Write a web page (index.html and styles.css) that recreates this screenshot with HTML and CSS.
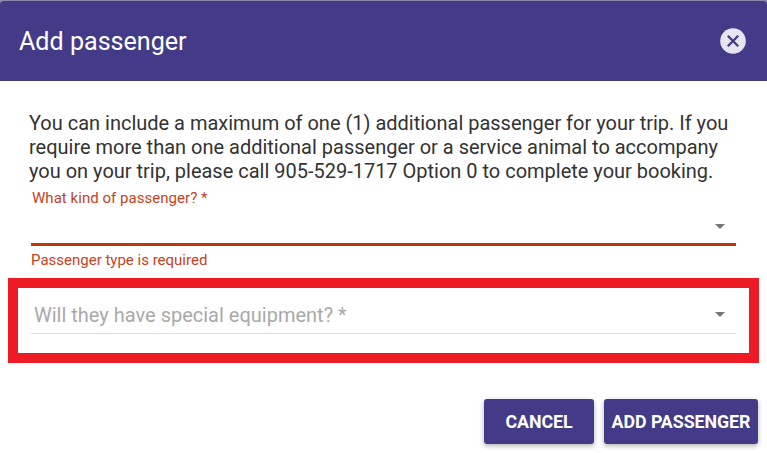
FILE: index.html
```html
<!DOCTYPE html>
<html lang="en">
  <head>
    <meta charset="utf-8">
    <title>Add passenger</title>
    <link rel="stylesheet" href="styles.css">
  </head>

  <body>
    <div class="dialog">
      <header class="toolbar">
        <h2>Add passenger</h2>
        <button class="close" aria-label="Close">
          <svg width="26" height="26" viewBox="0 0 26 26">
            <circle cx="13" cy="13" r="12.8" fill="#e7e5f2"/>
            <path d="M7.8 7.8l10.4 10.4M18.2 7.8L7.8 18.2" stroke="#433b87" stroke-width="2.3"/>
          </svg>
        </button>
      </header>

      <div class="content">
        <p>You can include a maximum of one (1) additional passenger for your trip. If you<br>
          require more than one additional passenger or a service animal to accompany<br>
          you on your trip, please call 905-529-1717 Option 0 to complete your booking.</p>

        <div class="field invalid">
          <label>What kind of passenger? *</label>
          <div class="select"><span class="arrow"></span></div>
          <div class="error">Passenger type is required</div>
        </div>
      </div>

      <div class="highlight">
        <div class="select">
          <span class="placeholder">Will they have special equipment? *</span>
          <span class="arrow"></span>
        </div>
      </div>

      <footer class="actions">
        <button class="btn btn-cancel">CANCEL</button>
        <button class="btn btn-add">ADD PASSENGER</button>
      </footer>
    </div>
  </body>
</html>
```

FILE: styles.css
```css
* {
  box-sizing: border-box;
  margin: 0;
}
body {
  font-family: Roboto, "Liberation Sans", sans-serif;
  color: #333;
  background-color: #8c88b2;
}
.dialog {
  height: 453px;
  padding-top: 1px;
  overflow: hidden;
  background: linear-gradient(#8c88b2 20px, #fff 20px);
}
.toolbar {
  display: flex;
  align-items: center;
  justify-content: space-between;
  height: 80px;
  padding: 0 21px 0 19px;
  border-radius: 4px 4px 0 0;
  background-color: #433b87;
  color: #fff;
}
.toolbar h2 {
  padding-top: 1px;
  font-size: 25.1px;
  font-weight: 400;
}
button {
  border: none;
  font-family: inherit;
}
.close {
  padding: 0;
  height: 26px;
  background: none;
}
.close svg {
  display: block;
}
.content {
  height: 197px;
  padding: 30px 31px 0 29px;
}
.content p {
  font-size: 19.99px;
  line-height: 24px;
  white-space: nowrap;
}
.field {
  margin: 6px 0 0 2px;
  font-size: 15px;
  line-height: 18px;
}
.field label {
  display: block;
  padding-left: 1px;
  letter-spacing: 0.04px;
}
.invalid {
  color: #c8411f;
}
.select {
  display: flex;
  align-items: center;
  border-bottom: 1px solid #dedede;
}
.invalid .select {
  height: 39px;
  padding-top: 3px;
  border-bottom: 3px solid #bf360c;
}
.error {
  margin-top: 5px;
}
.arrow {
  margin: 0 11px 0 auto;
  border: 5px solid transparent;
  border-top-color: #757575;
  border-bottom: none;
}
.highlight {
  height: 85px;
  margin: 0 8px;
  padding: 8px 13px;
  border: 10px solid #ed1c24;
}
.highlight .select {
  height: 38px;
}
.placeholder {
  padding-left: 3px;
  color: #a9a9a9;
  font-size: 20px;
}
.actions {
  display: flex;
  justify-content: flex-end;
  gap: 10px;
  padding: 36px 9px 0 0;
}
.btn {
  height: 45px;
  padding: 0;
  border-radius: 3px;
  background-color: #433b87;
  color: #fff;
  font-size: 17.8px;
  font-weight: 700;
  letter-spacing: -0.05px;
  box-shadow: 0 2px 5px rgba(0, 0, 0, 0.3);
}
.btn-cancel {
  width: 110px;
}
.btn-add {
  width: 154px;
}
```
